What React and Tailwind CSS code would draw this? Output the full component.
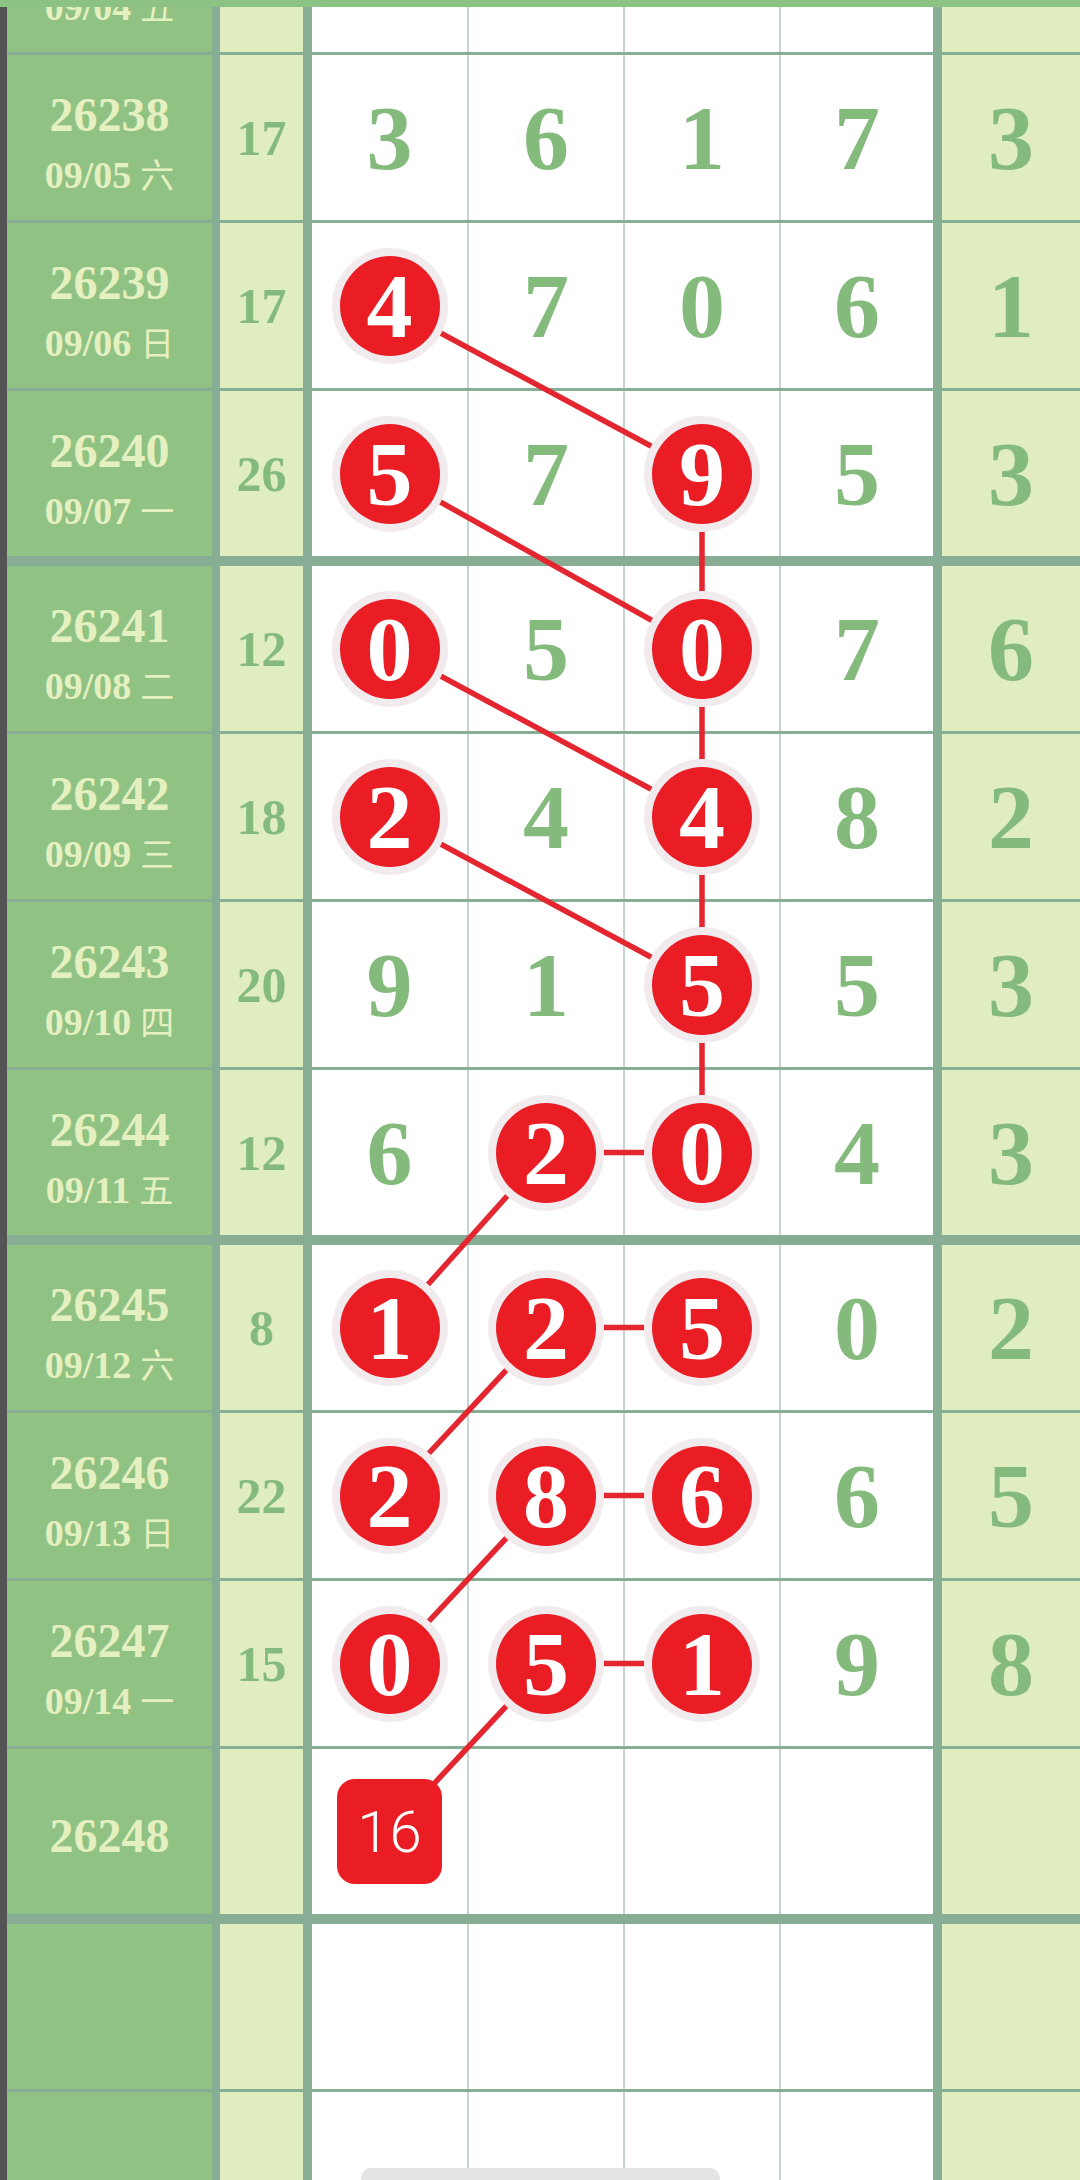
import React from "react";

const ROW_H = 165;
const THIN = 3;
const THICK = 10;
const TOP = 7;
const PARTIAL = 45;

// centres of the four white columns, page coordinates
const COL_X = [389.5, 546, 702, 857];

const rows = [
  { no: "26237", date: "09/04", wd: "五", partial: true },
  { no: "26238", date: "09/05", wd: "六", sum: 17, nums: [3, 6, 1, 7], hot: [], tail: 3 },
  { no: "26239", date: "09/06", wd: "日", sum: 17, nums: [4, 7, 0, 6], hot: [0], tail: 1 },
  { no: "26240", date: "09/07", wd: "一", sum: 26, nums: [5, 7, 9, 5], hot: [0, 2], tail: 3 },
  { no: "26241", date: "09/08", wd: "二", sum: 12, nums: [0, 5, 0, 7], hot: [0, 2], tail: 6, thick: true },
  { no: "26242", date: "09/09", wd: "三", sum: 18, nums: [2, 4, 4, 8], hot: [0, 2], tail: 2 },
  { no: "26243", date: "09/10", wd: "四", sum: 20, nums: [9, 1, 5, 5], hot: [2], tail: 3 },
  { no: "26244", date: "09/11", wd: "五", sum: 12, nums: [6, 2, 0, 4], hot: [1, 2], tail: 3 },
  { no: "26245", date: "09/12", wd: "六", sum: 8, nums: [1, 2, 5, 0], hot: [0, 1, 2], tail: 2, thick: true },
  { no: "26246", date: "09/13", wd: "日", sum: 22, nums: [2, 8, 6, 6], hot: [0, 1, 2], tail: 5 },
  { no: "26247", date: "09/14", wd: "一", sum: 15, nums: [0, 5, 1, 9], hot: [0, 1, 2], tail: 8 },
  { no: "26248", badge: "16" },
  { empty: true, thick: true },
  { empty: true },
];

// [row, col, row, col]
const links = [
  [2, 0, 3, 2],
  [3, 0, 4, 2],
  [4, 0, 5, 2],
  [5, 0, 6, 2],
  [3, 2, 4, 2],
  [4, 2, 5, 2],
  [5, 2, 6, 2],
  [6, 2, 7, 2],
  [7, 1, 7, 2],
  [7, 1, 8, 0],
  [8, 1, 8, 2],
  [8, 1, 9, 0],
  [9, 1, 9, 2],
  [9, 1, 10, 0],
  [10, 1, 10, 2],
  [10, 1, 11, 0],
];

let acc = TOP;
const rowY = rows.map((r, i) => {
  if (i === 0) {
    acc += PARTIAL;
    return acc - PARTIAL / 2;
  }
  acc += r.thick ? THICK : THIN;
  const c = acc + ROW_H / 2;
  acc += ROW_H;
  return c;
});

const serif = "font-['Liberation_Serif',serif]";
const cjk = "font-['Noto_Sans_CJK_SC',sans-serif]";

const Ball = ({ n }) => (
  <div className="relative z-10 w-[100px] h-[100px] rounded-full bg-[#ea1d25] ring-[8px] ring-[#f1ebee] flex items-center justify-center text-white text-[92px] leading-none font-bold">
    {n}
  </div>
);

const Row = ({ r }) => (
  <div className="flex h-[165px] shrink-0">
    {/* issue / date */}
    <div className="w-[205px] bg-[#90c283] flex flex-col items-center justify-center pt-[9px] gap-[17px] text-[#e5f0c1] font-bold">
      {r.no && <div className="text-[48px] leading-none">{r.no}</div>}
      {r.date && (
        <div className="text-[38px] leading-none flex items-baseline gap-[9px]">
          <span>{r.date}</span>
          <span className={`${cjk} font-normal text-[34px]`}>{r.wd}</span>
        </div>
      )}
    </div>

    {/* sum */}
    <div className="ml-[8px] w-[83px] bg-[#dfedc0] flex items-center justify-center text-[50px] leading-none font-bold text-[#84bb7c]">
      {r.sum}
    </div>

    {/* four digits */}
    <div className="ml-[9px] w-[621px] flex gap-[2px] bg-[#c7d6cd]">
      {[0, 1, 2, 3].map((i) => (
        <div
          key={i}
          className={`bg-white flex items-center justify-center text-[92px] leading-none font-bold text-[#84bb7c] ${
            i === 0 ? "w-[155px]" : i === 3 ? "w-[152px]" : "w-[154px]"
          }`}
        >
          {r.badge && i === 0 ? (
            <div className="relative z-10 w-[105px] h-[105px] rounded-[18px] bg-[#ea1d25] flex items-center justify-center text-white text-[58px] font-['Roboto',sans-serif] font-light">
              {r.badge}
            </div>
          ) : r.nums ? (
            r.hot.includes(i) ? (
              <Ball n={r.nums[i]} />
            ) : (
              r.nums[i]
            )
          ) : null}
        </div>
      ))}
    </div>

    {/* tail */}
    <div className="ml-[9px] w-[138px] bg-[#dfedc0] flex items-center justify-center text-[92px] leading-none font-bold text-[#84bb7c]">
      {r.tail}
    </div>
  </div>
);

export default function App() {
  return (
    <div className={`relative w-[1080px] h-[2180px] overflow-hidden bg-[#88ad95] ${serif}`}>
      <div className="h-[7px] bg-[#8cc384]" />
      <div className="flex">
        <div className="w-[7px] shrink-0 bg-[#545454]" />
        <div className="flex flex-col">
          {rows.map((r, i) =>
            i === 0 ? (
              <div key={i} className="h-[45px] overflow-hidden flex flex-col justify-end">
                <Row r={r} />
              </div>
            ) : (
              <div key={i} className={r.thick ? "mt-[10px]" : "mt-[3px]"}>
                <Row r={r} />
              </div>
            )
          )}
        </div>
      </div>

      {/* trend lines */}
      <svg className="absolute left-0 top-0 pointer-events-none" width="1080" height="2180">
        {links.map(([r1, c1, r2, c2], i) => (
          <line
            key={i}
            x1={COL_X[c1]}
            y1={rowY[r1]}
            x2={COL_X[c2]}
            y2={rowY[r2]}
            stroke="#e3262f"
            strokeWidth="5.5"
          />
        ))}
      </svg>

      {/* home indicator */}
      <div className="absolute left-[361px] top-[2168px] w-[359px] h-[20px] rounded-full bg-[#e4e4e4]" />
    </div>
  );
}
